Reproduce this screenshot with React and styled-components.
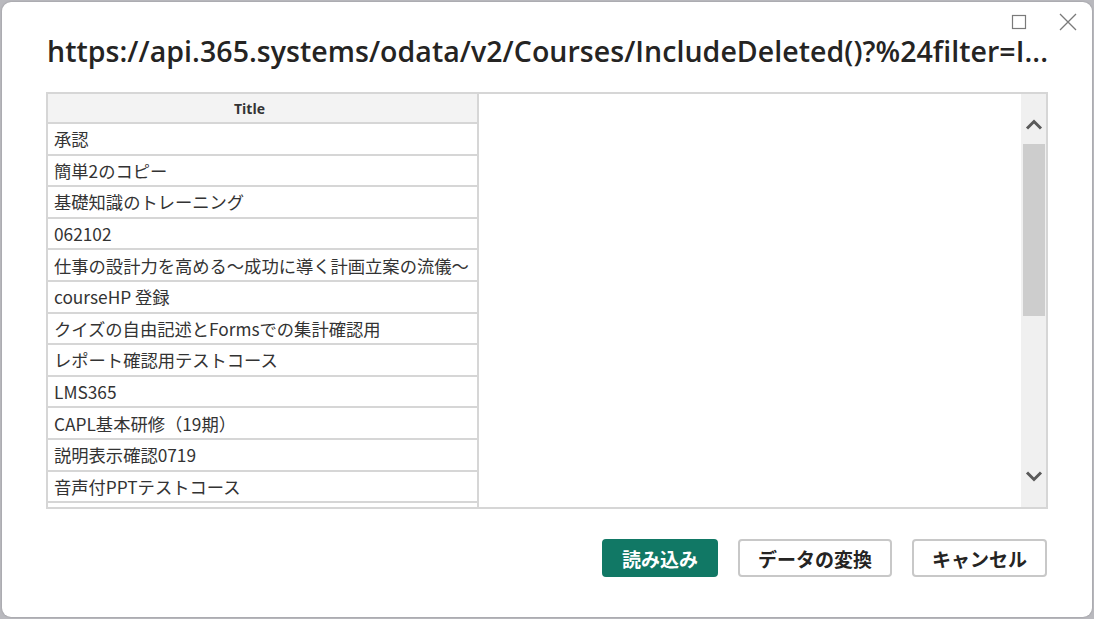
import styled, { createGlobalStyle } from "styled-components";

const GlobalStyle = createGlobalStyle`
  html, body { margin: 0; padding: 0; }
  body {
    background: #b9b9be;
    font-family: "Open Sans", "Noto Sans CJK JP", sans-serif;
    color: #252423;
  }
`;

const rows = [
  "承認",
  "簡単2のコピー",
  "基礎知識のトレーニング",
  "062102",
  "仕事の設計力を高める～成功に導く計画立案の流儀～",
  "courseHP 登録",
  "クイズの自由記述とFormsでの集計確認用",
  "レポート確認用テストコース",
  "LMS365",
  "CAPL基本研修（19期）",
  "説明表示確認0719",
  "音声付PPTテストコース",
  "",
];

const App = () => (
  <>
    <GlobalStyle />
    <Page>
      <Dialog>
        <WindowBar>
          <WinButton aria-label="最大化">
            <svg width="16" height="16" viewBox="0 0 16 16">
              <rect x="1.5" y="1.5" width="13" height="13" fill="none" stroke="#7a7a7a" strokeWidth="1.2" />
            </svg>
          </WinButton>
          <WinButton aria-label="閉じる">
            <svg width="18" height="18" viewBox="0 0 18 18">
              <path d="M1 1 L17 17 M17 1 L1 17" stroke="#7a7a7a" strokeWidth="1.3" />
            </svg>
          </WinButton>
        </WindowBar>
        <Title>https://api.365.systems/odata/v2/Courses/IncludeDeleted()?%24filter=I...</Title>
        <Preview>
          <Column>
            <HeaderCell>Title</HeaderCell>
            {rows.map((r, i) => (
              <Cell key={i}>{r}</Cell>
            ))}
          </Column>
          <Blank />
          <Scrollbar>
            <Arrow $up>
              <svg width="18" height="11" viewBox="0 0 18 11">
                <path d="M2 9.5 L9 2.5 L16 9.5" fill="none" stroke="#5a5a5a" strokeWidth="3" />
              </svg>
            </Arrow>
            <Track>
              <Thumb />
            </Track>
            <Arrow>
              <svg width="18" height="11" viewBox="0 0 18 11">
                <path d="M2 1.5 L9 8.5 L16 1.5" fill="none" stroke="#5a5a5a" strokeWidth="3" />
              </svg>
            </Arrow>
          </Scrollbar>
        </Preview>
        <Footer>
          <Button $primary>読み込み</Button>
          <Button>データの変換</Button>
          <Button>キャンセル</Button>
        </Footer>
      </Dialog>
    </Page>
  </>
);

export default App;

const Page = styled.div`
  width: 1094px;
  height: 619px;
  padding: 2px;
  box-sizing: border-box;
`;

const Dialog = styled.div`
  width: 1090px;
  height: 615px;
  background: #ffffff;
  border-radius: 9px;
  box-sizing: border-box;
  padding: 0 44px;
  display: flex;
  flex-direction: column;
  box-shadow: 0 0 2px rgba(0, 0, 0, 0.25);
`;

const WindowBar = styled.div`
  display: flex;
  justify-content: flex-end;
  align-items: center;
  gap: 31px;
  height: 20px;
  margin: 10px -29px 0 0;
`;

const WinButton = styled.div`
  display: flex;
  align-items: center;
  justify-content: center;
  width: 18px;
  height: 18px;
`;

const Title = styled.h1`
  margin: 2px 0 0 1px;
  font-family: "Open Sans", sans-serif;
  font-weight: 600;
  font-size: 28.5px;
  line-height: 34px;
  letter-spacing: 0.05px;
  color: #252423;
  white-space: nowrap;
`;

const Preview = styled.div`
  margin-top: 24px;
  height: 417px;
  box-sizing: border-box;
  border: 2px solid #d6d6d6;
  display: grid;
  grid-template-columns: 431px 1fr 25px;
  overflow: hidden;
`;

const Column = styled.div`
  border-right: 2px solid #d6d6d6;
  overflow: hidden;
`;

const HeaderCell = styled.div`
  height: 30px;
  box-sizing: border-box;
  border-bottom: 2px solid #d6d6d6;
  background: #f3f3f3;
  padding-right: 26px;
  font-family: "Open Sans", sans-serif;
  font-weight: 700;
  font-size: 14px;
  color: #333333;
  display: flex;
  align-items: center;
  justify-content: center;
`;

const Cell = styled.div`
  height: 31.6px;
  box-sizing: border-box;
  border-bottom: 2px solid #d6d6d6;
  padding: 0 6px;
  font-family: "Noto Sans CJK JP", "Open Sans", sans-serif;
  font-size: 17.3px;
  color: #333333;
  display: flex;
  align-items: center;
  white-space: nowrap;
  overflow: hidden;
`;

const Blank = styled.div`
  background: #ffffff;
`;

const Scrollbar = styled.div`
  background: #f0f0f0;
  display: flex;
  flex-direction: column;
`;

const Arrow = styled.div`
  height: 50px;
  box-sizing: border-box;
  display: flex;
  justify-content: center;
  align-items: ${(p) => (p.$up ? "flex-end" : "flex-start")};
  padding: ${(p) => (p.$up ? "0 0 14px" : "14px 0 0")};
`;

const Track = styled.div`
  flex: 1;
  padding: 0 1px 0 2px;
`;

const Thumb = styled.div`
  height: 172px;
  background: #cdcdcd;
`;

const Footer = styled.div`
  display: flex;
  justify-content: flex-end;
  gap: 20px;
  margin-top: 30px;
  padding-right: 1px;
`;

const Button = styled.div`
  height: 38px;
  box-sizing: border-box;
  padding: 0 18px;
  border-radius: 4px;
  display: flex;
  align-items: center;
  justify-content: center;
  font-family: "Noto Sans CJK JP", sans-serif;
  font-weight: 700;
  font-size: 19px;
  background: ${(p) => (p.$primary ? "#117865" : "#ffffff")};
  color: ${(p) => (p.$primary ? "#ffffff" : "#252423")};
  border: 2px solid ${(p) => (p.$primary ? "#117865" : "#c8c8c8")};
`;
